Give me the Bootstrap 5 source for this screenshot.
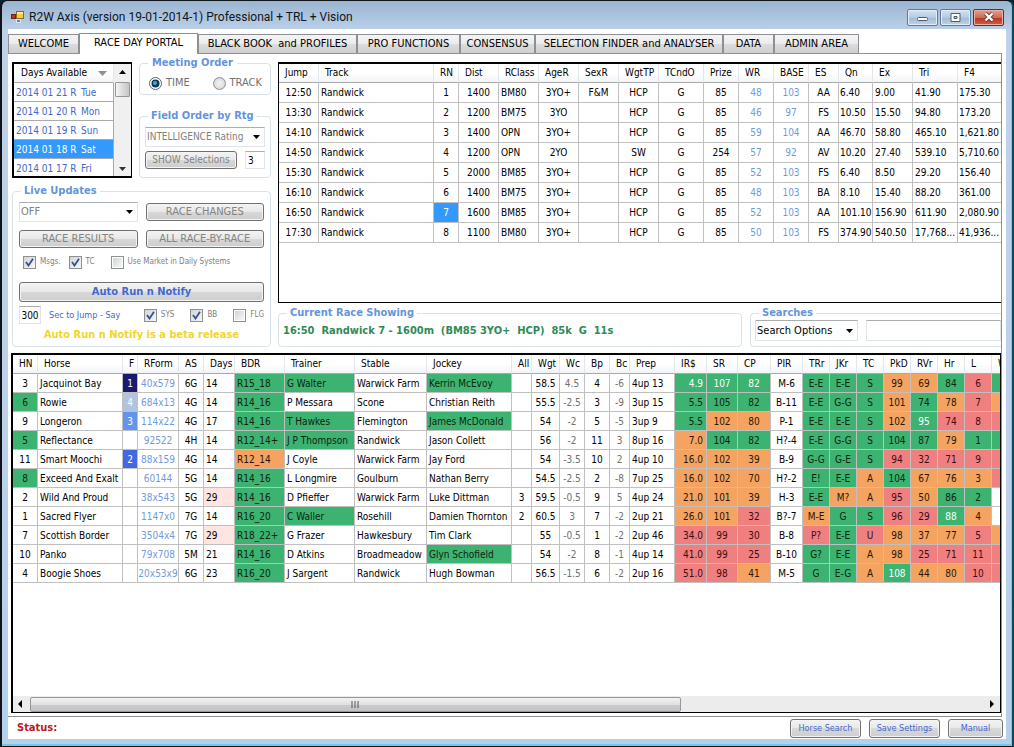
<!DOCTYPE html>
<html lang="en">
<head>
<meta charset="utf-8">
<meta name="viewport" content="width=device-width, initial-scale=1">
<title>R2W Axis</title>
<link href="https://cdn.jsdelivr.net/npm/bootstrap@5.3.0/dist/css/bootstrap.min.css" rel="stylesheet">
<style>
  :root {
    --ui: "DejaVu Sans Condensed", "DejaVu Sans", "Noto Sans", sans-serif;
    --heading: #6495dc;
    --line: #c0c0c0;
    --group: #d9e2e8;
  }
  body { background: #07242f; font-family: var(--ui); font-size: 10px; line-height: 14px; color: #000; }
  .app-window {
    min-height: 100vh; padding: 0 6px 7px 6px;
    background: linear-gradient(#9ab5d2, #bdd1e9 30px, #bcd1ea 60%, #b4d0ea);
    border: 1px solid #101418; border-left-width: 2px; border-right: 2px solid #0a4a5c;
    border-radius: 7px 7px 0 0; box-shadow: inset -1px -2px 0 #6fcbe8;
  }
  .title-bar { height: 28px; font: 12px/18px Roboto, sans-serif; color: #10151c; padding: 4px 2px 0 3px; }
  .caption-btn { width: 31px; height: 17px; padding: 0; border: 1px solid #62799a; border-radius: 2px; background: linear-gradient(#d5e2f1, #b5cae2 50%, #9fb9d6 51%, #bed3ea); box-shadow: inset 0 0 0 1px #e3edf8; display: flex; align-items: center; justify-content: center; }
  .caption-close { border-color: #6d2a25; background: linear-gradient(#e3a193, #cf6a57 50%, #b93320 51%, #d0604a); box-shadow: inset 0 0 0 1px #eab0a4; }
  .client { background: #fff; padding-top: 4px; }

  .tab-strip { border: 0; border-bottom: 1px solid #8d8f94; margin-right: 4px; height: 21px; align-items: flex-end; flex-wrap: nowrap; }
  .tab-strip .nav-link { height: 19px; width: 100%; padding: 0; margin: 0; border: 1px solid #8d8f94; border-bottom: 0; border-radius: 0; color: #000; font-size: 11px; line-height: 18px; white-space: pre; background: linear-gradient(#f4f4f4, #ebebeb 50%, #dcdcdc 51%, #cfcfcf); }
  .tab-strip .nav-link.active { height: 21px; line-height: 18px; padding-bottom: 2px; background: #fff; border-color: #8d8f94; margin-bottom: -1px; position: relative; z-index: 1; }
  .tab-page { margin-right: 4px; padding: 8px 0 3px 3px; border: 1px solid #8d8f94; border-top: 0; border-left: 0; }

  .upper { padding-left: 1px; gap: 7px; }
  .left-col { width: 259px; }
  .side-groups { margin: -6px 0 0 7px; min-width: 0; }
  .group-box { border: 1px solid var(--group); border-radius: 4px; min-width: 0; }
  .group-box > legend { float: none; width: auto; margin: 0 0 0 8px; padding: 0 3px; font-size: 11px; font-weight: 700; line-height: 14px; color: var(--heading); }
  .group-box .order-row { padding: 6px 8px 4px 9px; font-size: 11px; line-height: 14px; }
  .rating-body { padding: 4px 5px 8px; }

  .grid-box { border: 2px solid #000; background: #fff; overflow: hidden; }
  .races-box { height: 241px; border-width: 2px 0 1px 1px; }
  .field-box { margin-top: 6px; border-width: 2px 1px 1px 2px; }
  .grid { table-layout: fixed; border-collapse: separate; border-spacing: 0; }
  .grid th { font-weight: 400; height: 19px; line-height: 15px; padding: 1px 0 0 6px; vertical-align: top; text-align: left; white-space: nowrap; background: linear-gradient(#fff 50%, #f2f4f7); border-right: 1px solid #e3e6ea; border-bottom: 1px solid #a9a9a9; }
  .grid td { padding: 1px 0 0 2px; border-right: 1px solid var(--line); border-bottom: 1px solid var(--line); white-space: nowrap; overflow: hidden; }
  .races td { height: 20px; }
  .field td { height: 19px; }
  .grid .mid { text-align: center; padding-left: 0; }
  .grid .end { text-align: right; padding-right: 3px; }
  .grid td.tight { padding-left: 1px; }
  .pale { color: #6f9add; } .dim { color: #707070; }
  .bg-g { background: #3cb371; color: #10240f; } .bg-o { background: #f4a460; color: #2a1505; } .bg-r { background: #f08080; color: #3a0c10; }
  .bg-late { background: #ffe4e1; }
  .rank1 { background: #191970; } .rank2 { background: #4169e1; } .rank3 { background: #6495ed; } .rank4 { background: #b0c4de; }
  .grid .lit, .rank1, .rank2, .rank3, .rank4 { color: #fff; }
  .picked, .day-table tr.picked td { background: #3399ff; color: #fff; }

  .day-list { width: 120px; height: 116px; border: 2px solid #000; border-right-width: 1px; overflow: hidden; }
  .day-table td { height: 19px; color: #4169c8; border-bottom: 1px solid #a9a9a9; border-right: 1px solid #a9a9a9; }
  .day-table th { padding-left: 7px; }
  .day-date { display: inline-block; width: 65px; }
  .scroll-v { width: 17px; height: 112px; background: #f0f0f0; padding: 6px 0 5px; }
  .thumb-v { width: 15px; height: 15px; border: 1px solid #979797; border-radius: 1px; background: linear-gradient(90deg, #f5f5f5, #dcdcdc 50%, #c4c4c8); }

  .push { border: 1px solid #707070; border-radius: 3px; padding: 0 2px; height: 18px; line-height: 14px; color: #838383; font-size: 11px; background: linear-gradient(#f3f3f3, #e8e8e8 48%, #d8d8d8 50%, #cdcdcd); box-shadow: inset 0 0 0 1px #f4f4f4; white-space: nowrap; }
  .push-show { width: 92px; font-size: 10px; }
  .push-link { color: #4169d0; height: 19px; font-size: 9px; }
  .push-bold { color: #4169d0; height: 20px; font-weight: 700; margin-top: 13px; }
  .box-select, .box-input { border: 1px solid #e2e3ea; border-top-color: #abadb3; border-radius: 0; background-color: #fff; color: #000; padding: 0 2px; font-size: 11px; line-height: 14px; min-width: 0; }
  .box-select { appearance: none; height: 20px; padding: 0 12px 0 1px; background-image: url("data:image/svg+xml,%3Csvg xmlns='http://www.w3.org/2000/svg' width='7' height='4'%3E%3Cpath d='M0 0h7L3.5 4z'/%3E%3C/svg%3E"); background-repeat: no-repeat; background-position: right 4px center; }
  .muted-select { color: #808080; }
  .rating-select { font-size: 10px; }
  .count-input { width: 20px; height: 18px; font-size: 10px; }
  .secs-input { width: 22px; height: 18px; padding: 0 1px; font-size: 10px; text-align: center; }
  .secs-label { font-size: 9px; color: #4169c8; }
  .updates-body { padding: 4px 6px 0; }
  .tiny { font-size: 8px; line-height: 14px; color: #808080; white-space: nowrap; }
  .tick-row { margin-top: 7px; }
  .tick { appearance: none; flex: none; width: 13px; height: 13px; margin: 0; border: 1px solid #8e8f8f; background: linear-gradient(135deg, #d0d4da, #f8f8f8) content-box; padding: 1px; }
  .tick:checked { background: url("data:image/svg+xml,%3Csvg xmlns='http://www.w3.org/2000/svg' viewBox='0 0 9 9'%3E%3Cpath d='M1 4l2.5 3.5L8 .8' fill='none' stroke='%23384f8f' stroke-width='1.8'/%3E%3C/svg%3E") content-box, linear-gradient(135deg, #d0d4da, #f8f8f8); }
  .dial { appearance: none; flex: none; width: 13px; height: 13px; margin: 0; border: 1px solid #8e8f8f; border-radius: 50%; background: radial-gradient(#ececec 30%, #c4c8cc); }
  .dial:checked { border-color: #5a6068; background: #fff url("data:image/svg+xml,%3Csvg xmlns='http://www.w3.org/2000/svg' viewBox='0 0 11 11'%3E%3Ccircle cx='5.5' cy='5.5' r='4' fill='%23123a58'/%3E%3Ccircle cx='5' cy='5' r='2' fill='%234da3d0'/%3E%3C/svg%3E"); }
  .race-title { padding: 4px 4px 0; color: #2e8b57; font-size: 11px; font-weight: 700; white-space: pre; }
  .beta { color: #f2d42c; font-size: 11px; font-weight: 700; }
  .status-text { color: #c01818; font-size: 11px; font-weight: 700; }
  .lower-groups { margin-top: 3px; }
  .search-group { width: 251px; height: 41px; }
  .search-select { width: 103px; height: 21px; }

  .scroll-h { height: 16px; background: #ececec; }
  .scroll-h .arrow-left { margin: 0 3px; }
  .thumb-h { width: 66%; height: 15px; border: 1px solid #979797; border-radius: 2px; background: linear-gradient(#f2f2f2, #e0e0e0 50%, #cbcbcd 51%, #c2c2c6); }
  .status-bar { height: 22px; padding: 0 3px 0 9px; }
  .foot-buttons .push { width: 71px; }
  .foot-buttons .push:last-child { width: 55px; }
</style>
</head>
<body>
<div class="app-window d-flex flex-column">
  <header class="title-bar d-flex align-items-center flex-shrink-0">
    <svg width="14" height="14" viewBox="0 0 14 14" aria-hidden="true">
      <rect x="5.500" y="1.500" width="7" height="7" fill="#f7c948" stroke="#8a6a1c"/><rect x="6" y="2" width="6" height="2" fill="#fde79a"/>
      <rect x=".5" y="4.500" width="4" height="4" fill="#b93a22" stroke="#73200f"/>
      <rect x="5.500" y="9.500" width="4" height="3" fill="#4d86d8" stroke="#dbe8f8"/>
    </svg>
    <span class="ms-1">R2W Axis (version 19-01-2014-1) Professional + TRL + Vision</span>
    <div class="ms-auto d-flex" style="gap:2px">
      <button class="caption-btn" type="button" aria-label="Minimize"><svg width="13" height="9"><rect x="1.500" y="4.500" width="10" height="3" rx="1" fill="#fff" stroke="#505c6c"/></svg></button>
      <button class="caption-btn" type="button" aria-label="Restore"><svg width="11" height="9"><path fill="#fff" fill-rule="evenodd" stroke="#505c6c" d="M1 .5h9v8H1zM4 3.500h3v2H4z"/></svg></button>
      <button class="caption-btn caption-close" type="button" aria-label="Close"><svg width="12" height="10"><path d="M2.500 1.500l7 7M9.500 1.500l-7 7" stroke="#5b3a3a" stroke-width="4"/><path d="M2.500 1.500l7 7M9.500 1.500l-7 7" stroke="#fff" stroke-width="2.400"/></svg></button>
    </div>
  </header>

  <main class="client d-flex flex-column flex-grow-1">
    <ul class="nav nav-tabs tab-strip flex-shrink-0" id="tabs" role="tablist"></ul>

    <div class="tab-page d-flex flex-column flex-grow-1">
      <div class="upper d-flex">
        <div class="left-col flex-shrink-0 d-flex flex-column">
          <div class="d-flex">
            <div class="day-list flex-shrink-0 d-flex align-items-start">
              <table class="grid day-table flex-grow-1">
                <thead><tr><th>Days Available <svg class="ms-2" width="9" height="5"><path d="M0 0h9L4.500 5z" fill="#909090"/></svg></th></tr></thead>
                <tbody id="days"></tbody>
              </table>
              <div class="scroll-v d-flex flex-column align-items-center">
                <svg class="flex-shrink-0" width="7" height="4"><path d="M0 4h7L3.500 0z"/></svg>
                <div class="thumb-v flex-shrink-0 mt-2"></div>
                <svg class="mt-auto flex-shrink-0" width="7" height="4"><path d="M0 0h7L3.500 4z" fill="#333"/></svg>
              </div>
            </div>
            <div class="side-groups flex-grow-1 d-flex flex-column justify-content-between">
              <fieldset class="group-box">
                <legend class="ms-2 px-1">Meeting Order</legend>
                <div class="order-row d-flex align-items-center dim">
                  <input class="dial" type="radio" name="order" id="byTime" checked><label class="ms-1" for="byTime">TIME</label>
                  <input class="dial ms-auto" type="radio" name="order" id="byTrack"><label class="ms-1" for="byTrack">TRACK</label>
                </div>
              </fieldset>
              <fieldset class="group-box">
                <legend>Field Order by Rtg</legend>
                <div class="rating-body">
                  <select class="box-select muted-select rating-select w-100" aria-label="Field order rating"><option>INTELLIGENCE Rating</option></select>
                  <div class="d-flex justify-content-between mt-1">
                    <button class="push push-show" type="button">SHOW Selections</button>
                    <input class="box-input count-input" value="3" aria-label="Selections shown">
                  </div>
                </div>
              </fieldset>
            </div>
          </div>

          <fieldset class="group-box flex-grow-1" style="margin-top:6px">
            <legend>Live Updates</legend>
            <div class="updates-body">
              <div class="row gx-2 gy-2 align-items-center">
                <div class="col-6"><select class="box-select muted-select w-100 d-block" aria-label="Live updates"><option>OFF</option></select></div>
                <div class="col-6"><button class="push w-100 d-block" type="button">RACE CHANGES</button></div>
                <div class="col-6"><button class="push w-100 d-block" type="button">RACE RESULTS</button></div>
                <div class="col-6"><button class="push w-100 d-block" type="button">ALL RACE-BY-RACE</button></div>
              </div>
              <div class="tick-row d-flex align-items-center tiny">
                <input class="tick ms-1" type="checkbox" id="msgs" checked><label class="ms-1" for="msgs">Msgs.</label>
                <input class="tick ms-2" type="checkbox" id="tc" checked><label class="ms-1" for="tc">TC</label>
                <input class="tick ms-3" type="checkbox" id="market"><label class="ms-1" for="market">Use Market in Daily Systems</label>
              </div>
              <button class="push push-bold w-100 d-block" type="button">Auto Run n Notify</button>
              <div class="d-flex align-items-center tiny mt-1">
                <input class="box-input secs-input" id="secs" value="300"><label class="ms-2 secs-label" for="secs">Sec to Jump - Say</label>
                <input class="tick ms-auto" type="checkbox" id="sys" checked><label class="ms-1" for="sys">SYS</label>
                <input class="tick ms-3" type="checkbox" id="bb" checked><label class="ms-1" for="bb">BB</label>
                <input class="tick ms-3" type="checkbox" id="flg"><label class="ms-1" for="flg">FLG</label>
              </div>
              <div class="beta text-center mt-1">Auto Run n Notify is a beta release</div>
            </div>
          </fieldset>
        </div>

        <div class="flex-grow-1 d-flex flex-column" style="min-width:0">
          <div class="grid-box races-box"><table class="grid races" id="races"></table></div>
          <div class="lower-groups d-flex gap-2 flex-grow-1">
            <fieldset class="group-box flex-grow-1"><legend>Current Race Showing</legend>
              <div class="race-title">16:50  Randwick 7 - 1600m  (BM85 3YO+  HCP)  85k  G  11s</div>
            </fieldset>
            <fieldset class="group-box search-group border-end-0 rounded-end-0"><legend>Searches</legend>
              <div class="d-flex gap-2 ps-1">
                <select class="box-select search-select" aria-label="Search options"><option>Search Options</option></select>
                <input class="box-input flex-grow-1" type="text" aria-label="Search text">
              </div>
            </fieldset>
          </div>
        </div>
      </div>

      <div class="grid-box field-box flex-grow-1 d-flex flex-column">
        <div class="overflow-hidden flex-grow-1"><table class="grid field" id="field"></table></div>
        <div class="scroll-h d-flex align-items-center flex-shrink-0">
          <svg class="arrow-left" width="11" height="8"><path d="M6 0v8L2 4z"/></svg>
          <div class="thumb-h d-flex align-items-center justify-content-center"><svg width="9" height="7"><path d="M1 0v7M4 0v7M7 0v7" stroke="#555"/></svg></div>
          <svg class="ms-auto me-1" width="7" height="8"><path d="M1 0v8l4-4z"/></svg>
        </div>
      </div>
    </div>

    <footer class="status-bar d-flex align-items-center flex-shrink-0">
      <span class="status-text">Status:</span>
      <div class="ms-auto d-flex gap-2 foot-buttons">
        <button class="push push-link" type="button">Horse Search</button>
        <button class="push push-link" type="button">Save Settings</button>
        <button class="push push-link" type="button">Manual</button>
      </div>
    </footer>
  </main>
</div>
<script src="https://cdn.jsdelivr.net/npm/bootstrap@5.3.0/dist/js/bootstrap.bundle.min.js"></script>
<script>
const tabs = [["WELCOME",71],["RACE DAY PORTAL",119],["BLACK BOOK  and PROFILES",159],["PRO FUNCTIONS",103],["CONSENSUS",75],["SELECTION FINDER and ANALYSER",188],["DATA",51],["ADMIN AREA",85]];
document.getElementById("tabs").innerHTML = tabs.map(([name, w], i) =>
  `<li class="nav-item" style="width:${w}px" role="presentation"><button type="button" role="tab" class="nav-link${i === 1 ? " active" : ""}">${name}</button></li>`).join("");

const days = [["2014 01 21 R","Tue"],["2014 01 20 R","Mon"],["2014 01 19 R","Sun"],["2014 01 18 R","Sat"],["2014 01 17 R","Fri"]];
document.getElementById("days").innerHTML = days.map(([d, n]) =>
  `<tr${n === "Sat" ? ' class="picked"' : ""}><td><span class="day-date">${d}</span>${n}</td></tr>`).join("");

// Each column: heading, width, cell classes. A cell may end in "|" and a colour key; ";" stands for a comma.
const tint = { g: "bg-g", o: "bg-o", r: "bg-r", G: "bg-g lit", l: "bg-late", 1: "rank1", 2: "rank2", 3: "rank3", 4: "rank4", p: "picked" };
function fill(id, cols, rows) {
  const table = document.getElementById(id);
  table.style.width = cols.reduce((sum, c) => sum + c[1], 0) + "px";
  table.innerHTML = `<colgroup>${cols.map(c => `<col style="width:${c[1]}px">`).join("")}</colgroup>` +
    `<thead><tr>${cols.map(c => `<th>${c[0]}</th>`).join("")}</tr></thead><tbody>` +
    rows.trim().split("\n").map(r => "<tr>" + r.split(",").map((cell, i) => {
      const [text, key] = cell.trim().split("|");
      return `<td class="${cols[i][2] || ""} ${tint[key] || ""}">${text.replace(";", ",").replace("&", "&amp;")}</td>`;
    }).join("") + "</tr>").join("") + "</tbody>";
}

fill("races", [["Jump",40,"mid"],["Track",115],["RN",25,"mid"],["Dist",40,"mid"],["RClass",40],["AgeR",40,"mid"],["SexR",40,"mid"],["WgtTP",40,"mid"],["TCndO",45,"mid"],["Prize",35,"mid"],["WR",35,"mid pale"],["BASE",35,"mid pale"],["ES",30,"mid"],["Qn",34,"tight"],["Ex",40],["Tri",45],["F4",46,"tight"]], `
12:50,Randwick,1,1400,BM80,3YO+,F&M,HCP,G,85,48,103,AA,6.40,9.00,41.90,175.30
13:30,Randwick,2,1200,BM75,3YO,,HCP,G,85,46,97,FS,10.50,15.50,94.80,173.20
14:10,Randwick,3,1400,OPN,3YO+,,HCP,G,85,59,104,AA,46.70,58.80,465.10,1;621.80
14:50,Randwick,4,1200,OPN,2YO,,SW,G,254,57,92,AV,10.20,27.40,539.10,5;710.60
15:30,Randwick,5,2000,BM85,3YO+,,HCP,G,85,52,103,FS,6.40,8.50,29.20,156.40
16:10,Randwick,6,1400,BM75,3YO+,,HCP,G,85,48,103,BA,8.10,15.40,88.20,361.00
16:50,Randwick,7|p,1600,BM85,3YO+,,HCP,G,85,52,103,AA,101.10,156.90,611.90,2;080.90
17:30,Randwick,8,1100,BM80,3YO+,,HCP,G,85,50,103,FS,374.90,540.50,17;768...,41;936...`);

fill("field", [["HN",25,"mid"],["Horse",85],["F",15,"mid"],["RForm",41,"mid pale"],["AS",25,"mid"],["Days",31],["BDR",50],["Trainer",70],["Stable",72],["Jockey",85],["All",20,"mid"],["Wgt",28,"mid"],["Wc",25,"mid dim"],["Bp",25,"mid"],["Bc",20,"mid dim"],["Prep",45],["IR$",32,"end"],["SR",31,"mid"],["CP",33,"mid"],["PIR",32,"mid"],["TRr",27,"mid"],["JKr",27,"mid"],["TC",27,"mid"],["PkD",27,"mid"],["RVr",27,"mid"],["Hr",27,"mid"],["L",27,"mid"],["W",27,"mid"]], `
3,Jacquinot Bay,1|1,40x579,6G,14,R15_18|g,G Walter|g,Warwick Farm,Kerrin McEvoy|g,,58.5,4.5,4,-6,4up 13,4.9|G,107|G,82|G,M-6,E-E|g,E-E|g,S|g,99|o,69|o,84|g,6|r,|g
6|g,Rowie,4|4,684x13,4G,14,R14_16|g,P Messara,Scone,Christian Reith,,55.5,-2.5,3,-9,3up 15,5.5|g,105|g,82|g,B-11,E-E|g,G-G|g,S|g,101|o,74|g,78|o,7|r,|o
9,Longeron,3|3,114x22,4G,17,R14_16|g,T Hawkes|g,Flemington,James McDonald|g,,54,-2,5,-5,3up 9,5.5|g,102|o,80|o,P-1,E-E|g,E-E|g,S|g,102|o,95|G,74|r,8|r,|r
5|g,Reflectance,,92522,4H,14,R12_14+|g,J P Thompson|g,Randwick,Jason Collett,,56,-2,11,3,8up 16,7.0|o,104|g,82|g,H?-4,E-E|g,G-G|g,S|g,104|g,87|g,79|o,1|g,|g
11,Smart Moochi,2|2,88x159,4G,14,R12_14|o,J Coyle,Warwick Farm,Jay Ford,,54,-3.5,10,2,4up 10,16.0|o,102|o,39|o,B-9,G-G|g,G-E|g,S|g,94|r,32|r,71|r,9|r,|r
8|g,Exceed And Exalt,,60144,5G,14,R14_16|g,L Longmire,Goulburn,Nathan Berry,,54.5,-2.5,2,-8,7up 25,16.0|o,102|o,70|o,H?-2,E!|g,E-E|g,A|o,104|g,67|o,76|o,3|o,|r
2,Wild And Proud,,38x543,5G,29|l,R14_16|g,D Pfieffer,Warwick Farm,Luke Dittman,3,59.5,-0.5,9,5,4up 24,21.0|o,101|o,39|o,H-3,E-E|g,M?|o,A|o,95|r,50|o,86|g,2|g,
1,Sacred Flyer,,1147x0,7G,14,R16_20|g,C Waller|g,Rosehill,Damien Thornton,2,60.5,3,7,-2,2up 21,26.0|o,101|o,32|r,B?-7,M-E|o,G|g,S|g,96|r,29|r,88|G,4|o,
7,Scottish Border,,3504x4,7G,29|l,R18_22+|g,G Frazer,Hawkesbury,Tim Clark,,55,-0.5,1,-2,2up 46,34.0|r,99|r,30|r,B-8,P?|r,E-E|g,U|r,98|o,37|o,77|o,5|r,|o
10,Panko,,79x708,5M,21,R14_16|g,D Atkins,Broadmeadow,Glyn Schofield|g,,54,-2,8,-1,4up 14,41.0|r,99|r,25|r,B-10,G?|g,E-E|g,A|o,98|o,25|r,71|r,11|r,|r
4,Boogie Shoes,,20x53x9,6G,23,R16_20|g,J Sargent,Randwick,Hugh Bowman,,56.5,-1.5,6,-2,2up 16,51.0|r,98|r,41|o,M-5,G|g,E-G|g,A|o,108|G,44|o,80|o,10|r,|r`);
</script>
</body>
</html>
